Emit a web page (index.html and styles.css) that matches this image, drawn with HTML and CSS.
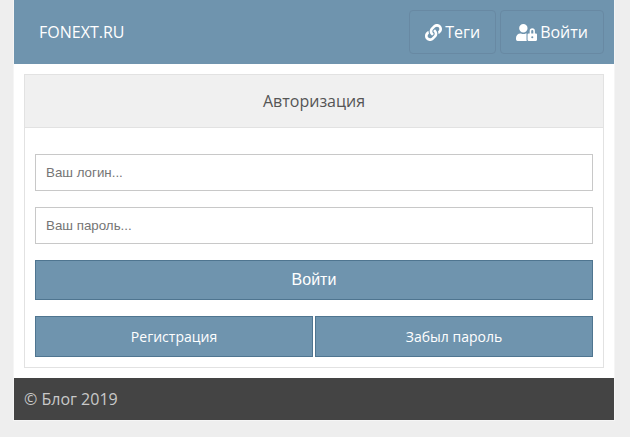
FILE: index.html
```html
<!DOCTYPE html>
<html lang="ru">
<head>
<meta charset="utf-8">
<title>Авторизация</title>
<link rel="stylesheet" href="styles.css">
</head>
<body>
<div class="page">
  <header class="topbar">
    <a class="brand">FONEXT.RU</a>
    <nav class="nav">
      <a class="nav-btn">
        <svg class="ico-link" viewBox="0 0 512 512"><path fill="#fff" d="M326.600 185.400c59.700 59.800 58.900 155.700.4 214.600l-67.200 67.200c-59.300 59.300-155.700 59.300-215 0-59.300-59.300-59.300-155.700 0-215l37.100-37.100c9.800-9.800 26.800-3.300 27.300 10.600.6 17.700 3.800 35.500 9.700 52.700 2 5.800.6 12.300-3.800 16.600l-13.100 13.100c-28 28-28.900 73.700-1.200 102 28 28.600 74.100 28.700 102.300.5l67.200-67.200c28.200-28.200 28.100-73.800 0-101.800-3.700-3.700-7.400-6.600-10.300-8.600-4.100-2.800-6.700-7.500-6.900-12.500-.4-10.600 3.400-21.500 11.700-29.800l21.100-21.100c5.500-5.500 14.200-6.200 20.600-1.700 7.400 5.100 14.300 10.900 20.100 16.900zM467.500 44.400c-59.300-59.300-155.700-59.300-215 0l-67.200 67.200c-58.500 59-59.300 154.900.4 214.600 5.800 6 12.700 11.800 20.100 16.900 6.400 4.500 15.100 3.800 20.600-1.700l21.100-21.100c8.300-8.300 12.100-19.200 11.700-29.800-.2-5-2.800-9.700-6.900-12.500-2.900-2-6.600-4.900-10.300-8.600-28.100-28-28.200-73.600 0-101.800l67.200-67.200c28.200-28.200 74.300-28.100 102.300.5 27.700 28.300 26.800 74-1.200 102l-13.100 13.100c-4.400 4.300-5.800 10.800-3.800 16.600 5.900 17.200 9.100 35 9.700 52.700.5 13.900 17.500 20.400 27.300 10.600l37.100-37.100c59.300-59.300 59.300-155.700 0-215z"/></svg>
        Теги
      </a>
      <a class="nav-btn">
        <svg class="ico-user" viewBox="0 0 640 512"><path fill="#fff" fill-rule="evenodd" d="M224 256A128 128 0 1 0 96 128a128 128 0 0 0 128 128zm96 64a63.080 63.080 0 0 1 8.100-30.500c-4.800-.5-9.500-1.500-14.500-1.500h-16.700a174.080 174.080 0 0 1-145.800 0h-16.700A134.430 134.430 0 0 0 0 422.400V464a48 48 0 0 0 48 48h280.900a63.540 63.540 0 0 1-8.900-32zm288-32h-32v-80a80 80 0 0 0-160 0v80h-32a32 32 0 0 0-32 32v160a32 32 0 0 0 32 32h224a32 32 0 0 0 32-32V320a32 32 0 0 0-32-32zM496 432a32 32 0 1 1 32-32 32 32 0 0 1-32 32zm32-144h-64v-80a32 32 0 0 1 64 0z"/></svg>
        Войти
      </a>
    </nav>
  </header>
  <main class="content">
    <section class="panel">
      <h1 class="panel-title">Авторизация</h1>
      <form class="panel-body">
        <input class="field" type="text" placeholder="Ваш логин...">
        <input class="field" type="password" placeholder="Ваш пароль...">
        <button class="btn btn-main" type="button">Войти</button>
        <div class="btn-row">
          <button class="btn btn-sub" type="button">Регистрация</button>
          <button class="btn btn-sub" type="button">Забыл пароль</button>
        </div>
      </form>
    </section>
  </main>
  <footer class="footer">© Блог 2019</footer>
</div>
</body>
</html>
```
FILE: styles.css
```css
* { box-sizing: border-box; }
html, body { margin: 0; padding: 0; }
body {
  background: #eeeeee;
  font-family: "Open Sans", sans-serif;
  height: 437px;
  overflow: hidden;
}
.page {
  width: 602px;
  margin-left: 13px;
  border-left: 1px solid #f5f5f5;
  border-right: 1px solid #f5f5f5;
  border-bottom: 1px solid #f5f5f5;
  background: #fff;
}
.topbar {
  height: 64px;
  background: #6f94ae;
  display: flex;
  align-items: center;
  justify-content: space-between;
  padding: 0 10px 0 25px;
}
.brand { color: #fff; font-size: 16px; }
.nav { display: flex; gap: 4px; }
.nav-btn {
  height: 44px;
  display: flex;
  align-items: center;
  gap: 3px;
  padding: 0 15px;
  color: #fff;
  font-size: 16px;
  border: 1px solid #6889a3;
  border-radius: 4px;
}
.ico-link { width: 17px; height: 17px; }
.ico-user { width: 21px; height: 17px; }
.content { padding: 10px; }
.panel { border: 1px solid #e2e2e2; }
.panel-title {
  margin: 0;
  height: 53px;
  line-height: 52px;
  background: #f0f0f0;
  border-bottom: 1px solid #e2e2e2;
  text-align: center;
  font-size: 16px;
  font-weight: 400;
  color: #555;
}
.panel-body {
  display: flex;
  flex-direction: column;
  padding: 26px 10px 10px;
}
.field {
  height: 37px;
  margin-bottom: 16px;
  padding: 0 10px;
  border: 1px solid #c8c8c8;
  background: #fff;
  font-family: "Liberation Sans", sans-serif;
  font-size: 13.333px;
  outline: none;
}
.field::placeholder { color: #757575; opacity: 1; }
.btn {
  background: #6f94ae;
  border: 1px solid #4f7590;
  color: #fff;
  font-family: "Open Sans", sans-serif;
  padding: 0;
}
.btn-main {
  height: 40px;
  font-family: "Liberation Sans", sans-serif;
  font-size: 16px;
  margin-bottom: 16px;
}
.btn-row { display: flex; gap: 2px; }
.btn-sub { flex: 1; height: 41px; font-size: 14px; }
.footer {
  height: 42px;
  background: #444444;
  color: #c9c9c9;
  font-size: 16px;
  line-height: 42px;
  padding-left: 10px;
}
```
